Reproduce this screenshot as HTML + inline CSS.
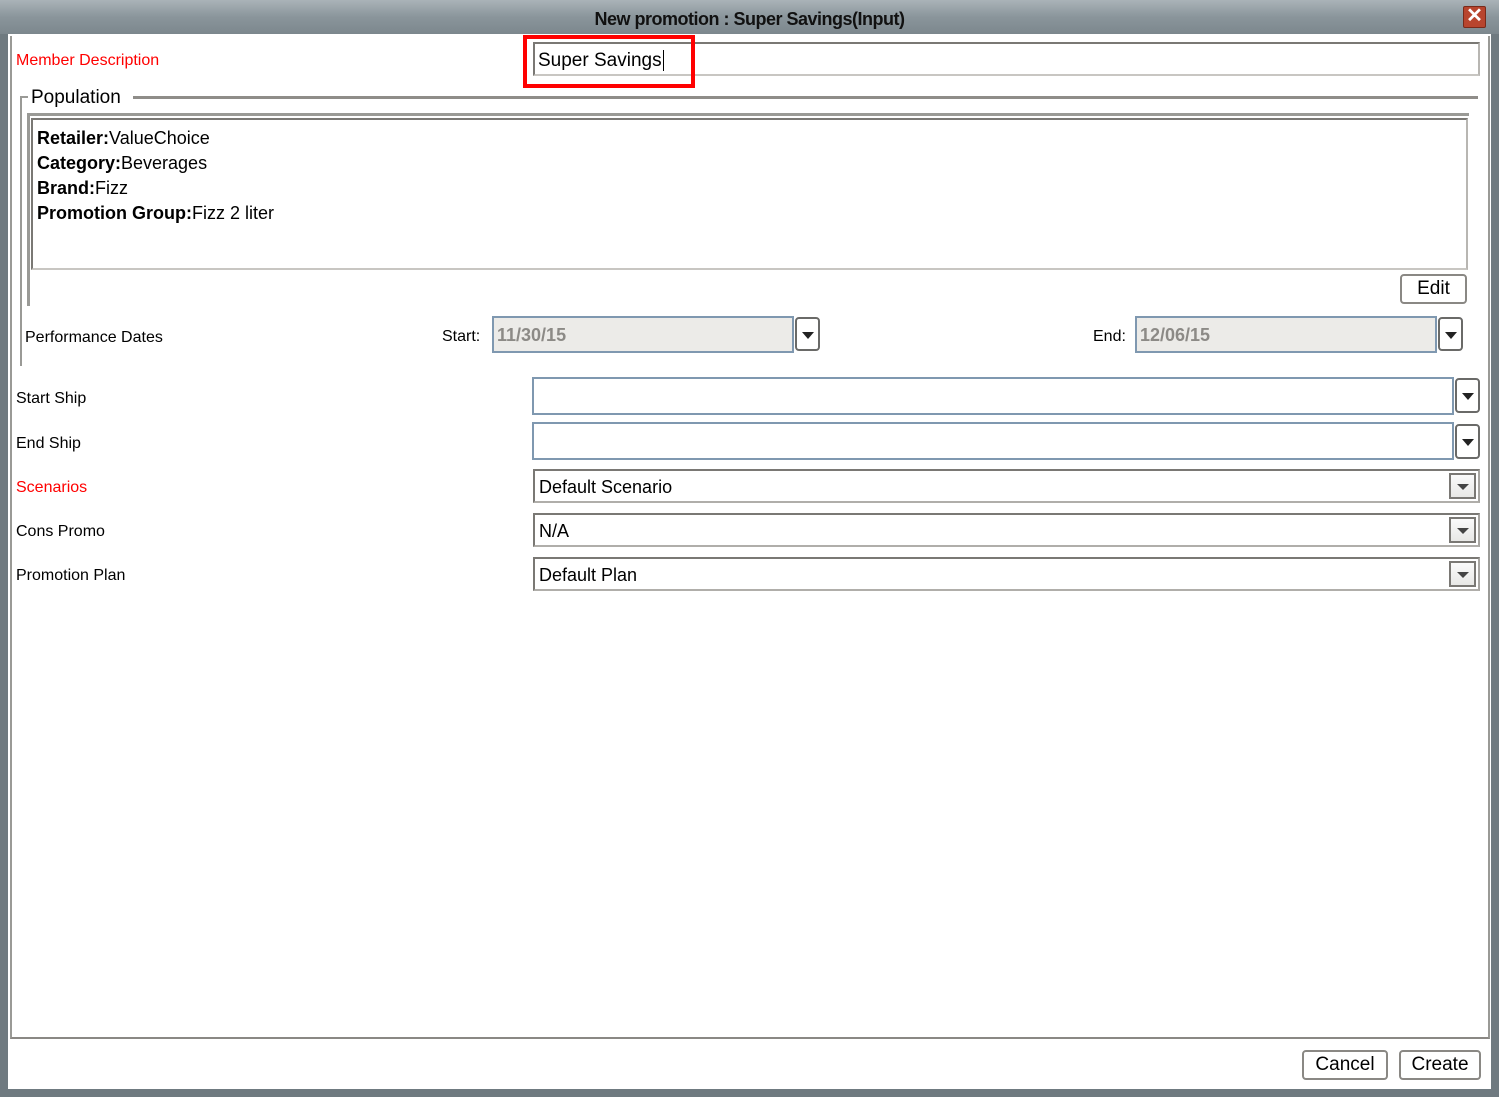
<!DOCTYPE html>
<html><head><style>
*{margin:0;padding:0;box-sizing:border-box}
body{width:1499px;height:1097px;background:#6f7a80;position:relative;overflow:hidden;font-family:"Liberation Sans",sans-serif;font-size:16px;color:#000}
.a{position:absolute}
.title{left:0;top:0;width:1499px;height:34px;background:linear-gradient(#aab3b8,#8a959b 50%,#7c878d);}
.title span{position:absolute;left:0;width:1499px;text-align:center;top:9px;font-weight:bold;font-size:18px;letter-spacing:-0.5px;color:#111}
.close{left:1463px;top:6px;width:23px;height:22px;background:#b8452e;border:1px solid #7a2a1a;border-radius:2px;color:#fff;font-weight:bold;font-size:20px;line-height:19px;text-align:center}
.win{left:8px;top:34px;width:1483px;height:1055px;background:#fff}
.panel{left:10px;top:36px;width:1480px;height:1003px;border-left:2px solid #9a9a96;border-bottom:2px solid #8a8884;border-right:2px solid #9a9a96}
.lbl{font-size:16px}
.red{color:#f00}
.field{border:2px solid #7a7874;border-right-color:#b8b6b2;border-bottom-color:#c8c6c2;background:#fff}
.blue{border:2px solid #7f98b0;background:#fff}
.dis{background:#ecebe8;color:#8c8a86;font-weight:bold;font-size:18px;padding:7px 0 0 3px}
.dd{width:25px;height:34px;border:2px solid #6a6a68;border-radius:4px;background:#fff}
.dd:after{content:"";position:absolute;left:5px;top:13px;border-left:6px solid transparent;border-right:6px solid transparent;border-top:7px solid #222}
.cb{border:2px solid #7a7874;border-bottom-color:#b0aeaa;border-right-color:#a8a6a2;background:#fff;height:34px;font-size:18px;padding:6px 0 0 4px}
.cbb{position:absolute;right:2px;top:2px;width:27px;height:26px;border:2px solid #7a7874;background:linear-gradient(#fafafa,#e8e8e6)}
.cbb:after{content:"";position:absolute;left:6px;top:9px;border-left:6px solid transparent;border-right:6px solid transparent;border-top:6px solid #444}
.btn{border:2px solid #8a8884;border-radius:4px;background:#fff;text-align:center;font-size:19px;line-height:25px}
</style></head><body>
<div class="a title"><span>New promotion : Super Savings(Input)</span></div>
<div class="a close">✕</div>
<div class="a win"></div>
<div class="a panel"></div>

<div class="a lbl red" style="left:16px;top:52px">Member Description</div>
<div class="a field" style="left:533px;top:42px;width:947px;height:34px;font-size:19px;padding:6px 0 0 3px">Super Savings<span style="border-left:1px solid #000;margin-left:1px"></span></div>
<div class="a" style="left:523px;top:35px;width:172px;height:53px;border:4px solid #f00"></div>

<div class="a" style="left:20px;top:96px;width:3px;height:270px;border-left:2px solid #9a9a96"></div>
<div class="a" style="left:20px;top:96px;width:8px;border-top:2px solid #9a9a96"></div>
<div class="a" style="left:30px;top:87px;font-size:19px;background:#fff;padding:0 3px 0 1px">Population</div>
<div class="a" style="left:133px;top:96px;width:1345px;border-top:3px solid #8f8d89"></div>
<div class="a" style="left:27px;top:113px;width:4px;height:193px;border-left:3px solid #9a9a96"></div>
<div class="a" style="left:27px;top:113px;width:1442px;border-top:3px solid #9a9a96"></div>
<div class="a field" style="left:31px;top:118px;width:1437px;height:152px;padding:6px 0 0 4px;font-size:18px;line-height:25px">
<b>Retailer:</b>ValueChoice<br><b>Category:</b>Beverages<br><b>Brand:</b>Fizz<br><b>Promotion Group:</b>Fizz 2 liter</div>
<div class="a btn" style="left:1400px;top:274px;width:67px;height:30px">Edit</div>

<div class="a lbl" style="left:25px;top:329px">Performance Dates</div>
<div class="a lbl" style="left:442px;top:328px">Start:</div>
<div class="a blue dis" style="left:492px;top:316px;width:302px;height:37px">11/30/15</div>
<div class="a dd" style="left:795px;top:317px"></div>
<div class="a lbl" style="left:1093px;top:328px">End:</div>
<div class="a blue dis" style="left:1135px;top:316px;width:302px;height:37px">12/06/15</div>
<div class="a dd" style="left:1438px;top:317px"></div>

<div class="a lbl" style="left:16px;top:390px">Start Ship</div>
<div class="a blue" style="left:532px;top:377px;width:922px;height:38px"></div>
<div class="a dd" style="left:1455px;top:378px;height:35px"></div>
<div class="a lbl" style="left:16px;top:435px">End Ship</div>
<div class="a blue" style="left:532px;top:422px;width:922px;height:38px"></div>
<div class="a dd" style="left:1455px;top:424px;height:35px"></div>

<div class="a lbl red" style="left:16px;top:479px">Scenarios</div>
<div class="a cb" style="left:533px;top:469px;width:947px">Default Scenario<div class="cbb"></div></div>
<div class="a lbl" style="left:16px;top:523px">Cons Promo</div>
<div class="a cb" style="left:533px;top:513px;width:947px">N/A<div class="cbb"></div></div>
<div class="a lbl" style="left:16px;top:567px">Promotion Plan</div>
<div class="a cb" style="left:533px;top:557px;width:947px">Default Plan<div class="cbb"></div></div>

<div class="a btn" style="left:1302px;top:1050px;width:86px;height:30px">Cancel</div>
<div class="a btn" style="left:1399px;top:1050px;width:82px;height:30px">Create</div>
</body></html>
